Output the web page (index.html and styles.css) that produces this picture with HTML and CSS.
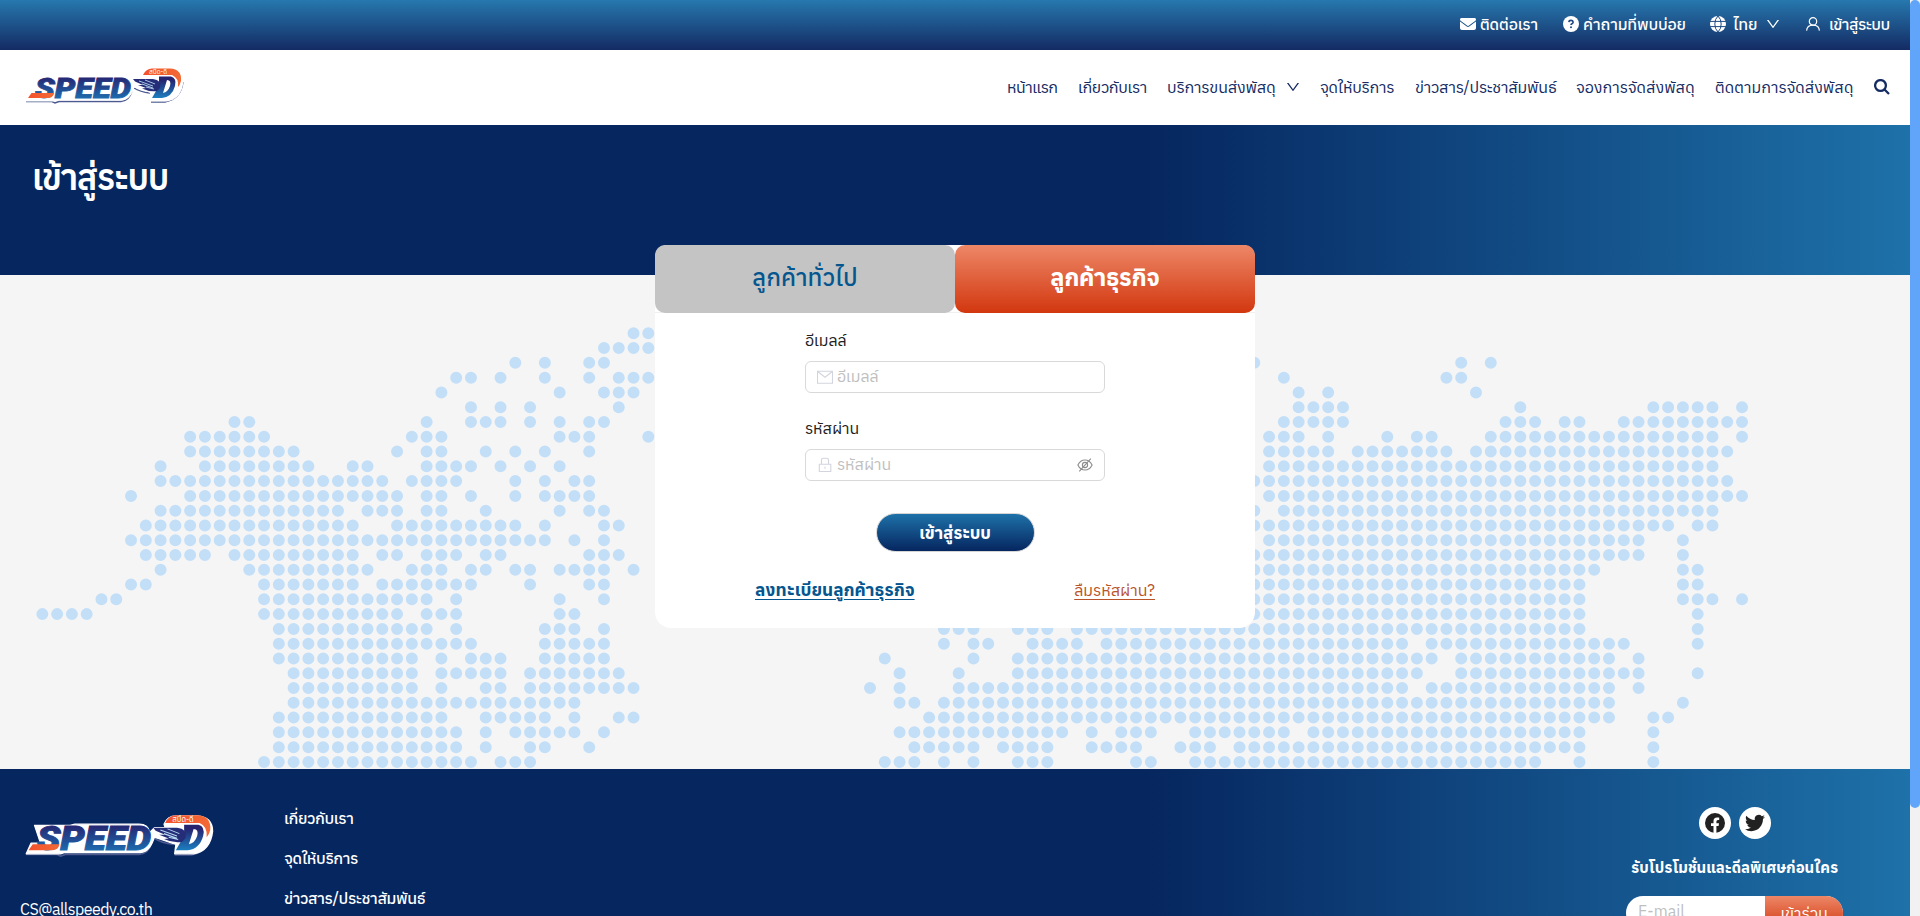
FILE: index.html
```html
<!DOCTYPE html>
<html lang="th">
<head>
<meta charset="utf-8">
<title>เข้าสู่ระบบ - Speed-D</title>
<link rel="stylesheet" href="styles.css">
</head>
<body>
<svg class="defs" width="0" height="0" aria-hidden="true">
  <defs>
    <linearGradient id="blue" x1="0" y1="0" x2="0" y2="1"><stop offset=".15" stop-color="#26236f"/><stop offset="1" stop-color="#1b7fc0"/></linearGradient>
    <linearGradient id="flame" x1="0" y1="0" x2="1" y2="0"><stop offset="0" stop-color="#f4512c"/><stop offset="1" stop-color="#f26a35"/></linearGradient>
    <symbol id="logo" viewBox="0 0 160 36">
      <g class="logo-shadow">
        <path d="M1 33.500H27L30 35L34 33.500H96Q104 33 107 23M109 20Q115 24 125 25M126 34H140Q156 31 158 14"/>
      </g>
      <g class="logo-back">
        <path d="M8 9H38L42 8H96Q104 8 105 15L109 11H118L117 8Q120 1 127 1H145Q158 2 158 14Q156 31 142 33H126L127 25L109 19Q105 32 97 32H33L30 33H1L5 24L13 24Z"/>
      </g>
      <text class="logo-word" x="10" y="29.500" textLength="96" lengthAdjust="spacingAndGlyphs">SPEED</text>
      <path d="M6.500 25H29Q28 30 23 30H3Z" fill="url(#flame)"/>
      <path fill-rule="evenodd" d="M134 8.500H146Q152 10 150 18Q147 29 137 30H127L131 23L134 17ZM142 12L138 25Q143 24 145 18Q146.500 12 142 12Z" fill="url(#blue)"/>
      <path d="M108 11H128Q137 12 135 20L132 23Q124 24 117 20.500L121 20L113 17L118 17L110 13.500Z" fill="#252c78"/>
      <path d="M114 13L128 18M117 16L128 20M121 19L129 21M120 12L130 16" stroke="#b5d8f0" stroke-width=".9" fill="none"/>
      <path d="M118 7Q121 0.500 127 0.500H145Q157 1 156 13Q155 17 153 19Q154 10 147 7Z" fill="url(#flame)"/>
      <text class="logo-tag" x="124" y="6.200" textLength="18" lengthAdjust="spacingAndGlyphs">สปีด-ดี</text>
    </symbol>
    <symbol id="chevron" viewBox="64 64 896 896"><path d="M884 256h-75c-5.100 0-9.900 2.500-12.900 6.600L512 654.200 227.900 262.600c-3-4.100-7.800-6.600-12.900-6.600h-75c-6.500 0-10.300 7.400-6.500 12.700l352.600 486.100c12.800 17.600 39 17.600 51.700 0l352.600-486.100c3.900-5.300.1-12.700-6.400-12.700z"/></symbol>
  </defs>
</svg>

<div class="page">
  <div class="topbar">
    <a class="top-item contact"><svg class="fa" viewBox="0 0 512 512"><path d="M48 64C21.500 64 0 85.500 0 112c0 15.100 7.100 29.300 19.200 38.400L236.800 313.600c11.400 8.500 27 8.500 38.400 0L492.800 150.400c12.100-9.100 19.200-23.300 19.200-38.400c0-26.500-21.500-48-48-48H48zM0 176V384c0 35.300 28.700 64 64 64H448c35.300 0 64-28.700 64-64V176L294.400 339.200c-22.800 17.100-54 17.100-76.800 0L0 176z"/></svg><span>ติดต่อเรา</span></a>
    <a class="top-item faq"><svg class="fa" viewBox="0 0 16 16"><circle cx="8" cy="8" r="8"/><path d="M5.900 6.100Q6 4.400 8 4.400T10.100 6.200Q10.100 7.200 9 7.700 8 8.200 8 9" class="question"/><circle cx="8" cy="11.200" r="1" class="question-dot"/></svg><span>คำถามที่พบบ่อย</span></a>
    <a class="top-item lang"><svg class="fa" viewBox="0 0 16 16"><circle cx="8" cy="8" r="8"/><path class="globe-lines" d="M0 5.400H16M0 10.600H16M8 0Q4.800 3 4.800 8T8 16M8 0Q11.200 3 11.200 8T8 16"/></svg><span>ไทย</span><svg class="chev"><use href="#chevron"/></svg></a>
    <a class="top-item login"><svg class="user" viewBox="0 0 14 14"><circle cx="7" cy="4.400" r="3.700"/><path d="M.6 13.600Q1 8.200 7 8.100T13.400 13.600"/></svg><span>เข้าสู่ระบบ</span></a>
  </div>

  <header class="header">
    <svg class="brand"><use href="#logo"/></svg>
    <nav class="nav">
      <a class="n1">หน้าแรก</a><a class="n2">เกี่ยวกับเรา</a><a class="n3"><span>บริการขนส่งพัสดุ</span><svg class="chev"><use href="#chevron"/></svg></a><a class="n4">จุดให้บริการ</a><a class="n5">ข่าวสาร/ประชาสัมพันธ์</a><a class="n6">จองการจัดส่งพัสดุ</a><a class="n7">ติดตามการจัดส่งพัสดุ</a>
      <svg class="search" viewBox="0 0 16 16"><circle cx="6.500" cy="6.500" r="5.400"/><path d="M10.500 10.500L15 15"/></svg>
    </nav>
  </header>

  <section class="hero"><h1>เข้าสู่ระบบ</h1></section>

  <main class="main">
    <svg class="map" viewBox="-2.865 -3.945 129.230 33.424">
      <path d="M40 0h1.010M38 1h3.010M32 2h.01M34 2h.01M37 2h1.010M82 2h.01M96 2h.01M98 2h.01
      M28 3h1.010M31 3h.01M34 3h.01M37 3h.01M39 3h2.010M84 3h.01M95 3h1.010
      M27 4h.01M35 4h.01M38 4h2.010M85 4h.01M87 4h.01M97 4h.01
      M29 5h.01M31 5h.01M33 5h.01M39 5h.01M85 5h3.010M100 5h.01M109 5h4.010M115 5h.01
      M13 6h1.010M26 6h.01M29 6h2.010M33 6h.01M35 6h.01M37 6h1.010M84 6h4.010M99 6h2.010M103 6h1.010M107 6h8.010
      M10 7h5.010M25 7h2.010M35 7h2.010M41 7h.01M83 7h2.010M87 7h.01M91 7h.01M93 7h1.010M98 7h15.010M115 7h.01
      M10 8h7.010M24 8h.01M26 8h1.010M30 8h.01M32 8h.01M34 8h.01M37 8h.01M83 8h4.010M89 8h6.010M97 8h17.010
      M8 9h.01M11 9h7.010M21 9h1.010M26 9h3.010M31 9h.01M33 9h.01M35 9h.01M83 9h30.010
      M8 10h15.010M25 10h3.010M32 10h.01M34 10h.01M36 10h1.010M82 10h32.010
      M6 11h.01M10 11h14.010M26 11h1.010M29 11h.01M32 11h.01M34 11h3.010M83 11h32.010
      M8 12h12.010M22 12h2.010M26 12h1.010M30 12h.01M35 12h.01M37 12h1.010M82 12h.01M84 12h29.010
      M7 13h14.010M24 13h8.010M34 13h.01M38 13h1.010M82 13h28.010M112 13h1.010
      M6 14h28.010M36 14h.01M38 14h.01M83 14h25.010M111 14h.01
      M7 15h4.010M13 15h8.010M23 15h1.010M26 15h2.010M30 15h1.010M37 15h2.010M82 15h26.010M111 15h.01
      M8 16h.01M14 16h8.010M25 16h2.010M29 16h1.010M32 16h1.010M35 16h3.010M40 16h.01M82 16h23.010M111 16h1.010
      M6 17h1.010M15 17h6.010M23 17h6.010M33 17h.01M37 17h1.010M82 17h22.010M111 17h1.010
      M4 18h1.010M15 18h11.010M28 18h.01M35 18h.01M38 18h.01M82 18h22.010M111 18h2.010M115 18h.01
      M0 19h3.010M15 19h9.010M26 19h2.010M35 19h1.010M82 19h22.010M112 19h.01
      M16 20h10.010M28 20h.01M34 20h2.010M38 20h.01M61 20h2.010M66 20h2.010M70 20h34.010M112 20h.01
      M16 21h13.010M34 21h4.010M61 21h.01M63 21h1.010M67 21h3.010M72 21h20.010M94 21h13.010M112 21h.01
      M16 22h9.010M27 22h.01M29 22h2.010M34 22h4.010M57 22h.01M63 22h.01M66 22h28.010M96 22h10.010M108 22h.01
      M17 23h8.010M27 23h4.010M33 23h6.010M58 23h.01M62 23h.01M66 23h27.010M96 23h12.010M112 23h.01
      M17 24h8.010M27 24h.01M30 24h1.010M33 24h7.010M56 24h.01M58 24h.01M62 24h30.010M94 24h12.010M108 24h.01
      M17 25h19.010M58 25h1.010M61 25h45.010M111 25h.01
      M16 26h11.010M30 26h4.010M36 26h.01M39 26h1.010M60 26h46.010M109 26h1.010
      M16 27h12.010M30 27h.01M32 27h4.010M38 27h.01M58 27h11.010M71 27h.01M73 27h2.010M78 27h6.010M86 27h18.010M109 27h.01
      M16 28h12.010M30 28h.01M33 28h1.010M37 28h.01M59 28h4.010M65 28h3.010M71 28h3.010M77 28h2.010M81 28h23.010M109 28h.01
      M15 29h14.010M31 29h2.010M57 29h2.010M61 29h.01M63 29h.01M66 29h2.010M74 29h1.010M78 29h23.010M104 29h.01M109 29h.01"/>
    </svg>
    <div class="card">
      <div class="tabs"><button class="tab">ลูกค้าทั่วไป</button><button class="tab active">ลูกค้าธุรกิจ</button></div>
      <form class="form">
        <label>อีเมลล์</label>
        <div class="field"><svg viewBox="0 0 16 16"><path d="M.5 2.300h15v11.900H.5zM1 2.800l7 5.500 7-5.500"/></svg><span class="ph">อีเมลล์</span></div>
        <label>รหัสผ่าน</label>
        <div class="field"><svg viewBox="0 0 16 16"><path d="M2.300 7.300h11.500v7.200H2.300zM4.500 7V2.800q0-1.600 1.600-1.600h3.800q1.600 0 1.600 1.600V7M8 9.800v2"/></svg><span class="ph">รหัสผ่าน</span><svg class="eye" viewBox="0 0 16 16"><path d="M.9 8Q3.300 3 8 3t7.100 5Q12.700 13 8 13T.9 8zM13.800 1.700L2.300 14.400"/><circle cx="8" cy="8" r="2.600"/></svg></div>
        <button class="submit">เข้าสู่ระบบ</button>
      </form>
      <div class="links"><a class="register">ลงทะเบียนลูกค้าธุรกิจ</a><a class="forgot">ลืมรหัสผ่าน?</a></div>
    </div>
  </main>

  <footer class="footer">
    <div class="foot-brand"><svg class="brand-big"><use href="#logo"/></svg><p class="mail">CS@allspeedy.co.th</p></div>
    <div class="foot-links"><a>เกี่ยวกับเรา</a><a>จุดให้บริการ</a><a>ข่าวสาร/ประชาสัมพันธ์</a></div>
    <div class="foot-news">
      <div class="social">
        <span><svg viewBox="0 0 20 20"><circle cx="10" cy="10" r="10"/><path class="cut" d="M8.500 20v-7H6V10.200h2.500V8q0-3.600 3.500-3.600 1.200 0 2.200.2V7h-1.300q-1.500 0-1.500 1.500v1.700H14l-.4 2.800h-2.200v7z"/></svg></span>
        <span><svg viewBox="0 0 24 24"><path d="M23.950 4.570a10 10 0 0 1-2.820.77 4.960 4.960 0 0 0 2.160-2.720c-.95.550-2 .950-3.130 1.180a4.920 4.920 0 0 0-8.380 4.480C7.690 8.090 4.070 6.130 1.640 3.160a4.820 4.820 0 0 0-.67 2.480c0 1.710.87 3.210 2.190 4.100a4.900 4.900 0 0 1-2.230-.62v.06a4.920 4.920 0 0 0 3.950 4.830 5 5 0 0 1-2.210.08 4.940 4.940 0 0 0 4.600 3.420A9.870 9.870 0 0 1 0 19.540a13.990 13.990 0 0 0 7.560 2.210c9.050 0 14-7.500 14-13.980 0-.21 0-.42-.02-.63a9.940 9.940 0 0 0 2.410-2.570z"/></svg></span>
      </div>
      <p class="promo">รับโปรโมชั่นและดีลพิเศษก่อนใคร</p>
      <div class="subscribe"><span class="email">E-mail</span><button>เข้าร่วม</button></div>
    </div>
  </footer>
  <div class="scroll"><div class="thumb"></div></div>
</div>
</body>
</html>
```
FILE: styles.css
```css
* { box-sizing: border-box; }
body { margin: 0; font-family: "Anuphan", "Prompt", "Noto Sans Thai", "Open Sans", "Noto Sans", sans-serif; font-size: 16px; color: #212121; }
button { font-family: inherit; border: 0; padding: 0; margin: 0; }
svg { flex: none; }
.defs { position: absolute; }
.page { position: relative; width: 1920px; height: 916px; overflow: hidden; padding-right: 10px; display: flex; flex-direction: column; white-space: nowrap; }

.topbar { height: 50px; flex: none; background: linear-gradient(#2678ae, #142b63); color: #fff; font-weight: 500; display: flex; justify-content: flex-end; align-items: center; padding: 0 20px 2px 0; letter-spacing: -.2px; }
.top-item { display: flex; align-items: center; }
.top-item span { line-height: 24px; }
.fa { width: 16px; height: 16px; fill: #fff; margin-right: 4px; }
.question { fill: none; stroke: #1d4a82; stroke-width: 1.600; }
.question-dot { fill: #1d4a82; }
.globe-lines { fill: none; stroke: #1d4a82; stroke-width: 1; }
.contact { width: 103px; }
.faq { width: 147px; }
.lang { width: 96px; }
.lang .fa { margin-right: 7px; }
.lang .chev { margin-left: 9px; }
.chev { width: 14px; height: 14px; fill: currentColor; margin-left: 10px; }
.user { width: 14px; height: 14px; fill: none; stroke: #fff; stroke-width: 1.200; margin-right: 9px; }
.login { width: 84px; letter-spacing: -.6px; }

.header { height: 75px; flex: none; background: #fff; display: flex; justify-content: space-between; align-items: center; padding: 0 20px 2px 25px; color: #142b63; }
.brand { width: 160px; height: 36px; margin-bottom: 1px; }
.logo-word { font: italic 900 28px "Roboto", sans-serif; fill: url(#blue); stroke: url(#blue); stroke-width: .8; }
.logo-tag { font-size: 6.5px; fill: #fff; letter-spacing: 0; }
.logo-shadow path { fill: none; stroke: #4c5a90; stroke-width: 1.400; }
.logo-back path { fill: #fff; stroke: #fff; stroke-width: 1; stroke-linejoin: round; }
.nav { display: flex; align-items: center; }
.nav a { display: flex; align-items: center; }
.n1 { width: 71px; letter-spacing: -.5px; }
.n2 { width: 89px; letter-spacing: -.3px; }
.n3 { width: 153px; letter-spacing: -.15px; }
.n4 { width: 95px; letter-spacing: -.2px; }
.n5 { width: 161px; letter-spacing: -.2px; }
.n6 { width: 139px; }
.n7 { width: 159px; }
.search { width: 16px; height: 16px; fill: none; stroke: #142b63; stroke-width: 2.300; }

.hero { height: 150px; flex: none; background: linear-gradient(90deg, #06265f 60%, #1e71a9); padding: 25px 0 0 32px; }
h1 { margin: 0; color: #fff; font-size: 35px; line-height: 54px; font-weight: 600; letter-spacing: -1.3px; }

.main { position: relative; height: 494px; flex: none; background: #f5f5f5; display: flex; justify-content: center; }
.map { position: absolute; left: 0; top: 0; width: 1910px; height: 494px; fill: none; stroke: #c3dff8; stroke-width: .812; stroke-linecap: round; stroke-dasharray: 0 1; }
.card { position: relative; width: 600px; height: 383px; margin-top: -30px; background: #fff; border-radius: 12px 12px 16px 16px; }
.tabs { display: flex; height: 68px; border-bottom: 1px solid #f0f0f0; }
.tab { width: 300px; height: 68px; border-radius: 10px; background: #c4c4c4; color: #05568f; font-size: 24px; font-weight: 500; padding-bottom: 4px; }
.tab.active { background: linear-gradient(#ed8767, #d2370f); color: #fff; font-weight: 700; letter-spacing: -.3px; }
.form { width: 300px; margin: 0 auto; padding-top: 14px; }
label { display: block; height: 34px; line-height: 26px; }
.field { height: 32px; border: 1px solid #d9d9d9; border-radius: 6px; display: flex; align-items: center; padding: 0 11px; margin-bottom: 22px; color: #bfbfbf; }
.field svg { width: 16px; height: 16px; fill: none; stroke: #d3d5de; stroke-width: 1.100; margin-right: 4px; }
.field .ph { flex: 1; line-height: 26px; padding-bottom: 2px; }
.field .eye { stroke: #8c8c8c; margin: 0; }
.submit { display: block; width: 159px; height: 39px; margin: 32px auto 0; border-radius: 20px; border: 1px solid #d5d5d5; color: #fff; font-size: 17px; font-weight: 700; letter-spacing: -.2px; background: linear-gradient(#1e71a9, #06265f); }
.links { display: flex; justify-content: space-between; padding: 23px 100px 0; line-height: 30px; }
.links a { text-decoration: underline; text-underline-offset: 3px; }
.register { color: #05568f; font-weight: 700; font-size: 17.5px; }
.forgot { color: #b9532b; }

.footer { height: 147px; flex: none; overflow: hidden; background: linear-gradient(90deg, #06265f 60%, #1e71a9); color: #fff; display: flex; }
.foot-brand { width: 284px; padding: 43px 0 0 25px; }
.brand-big { display: block; width: 190px; height: 48px; }
.mail { margin: 37px 0 0 -5px; line-height: 24px; letter-spacing: -.5px; }
.foot-links { flex: 1; padding-top: 30px; display: flex; flex-direction: column; font-weight: 500; letter-spacing: -.4px; }
.foot-links a { flex: none; height: 40px; line-height: 38px; }
.foot-news { width: 284px; padding-top: 38px; }
.social { display: flex; gap: 8px; padding-left: 73px; }
.social span { width: 32px; height: 32px; border-radius: 50%; background: #fff; display: flex; align-items: center; justify-content: center; }
.social svg { width: 20px; height: 20px; fill: #212121; }
.social .cut { fill: #fff; }
.promo { margin: 12px 0 0 5px; line-height: 32px; font-weight: 700; font-size: 15.2px; }
.subscribe { display: flex; width: 217px; height: 34px; margin-top: 13px; border-radius: 17px; overflow: hidden; background: #fff; }
.email { width: 139px; padding-left: 12px; line-height: 31px; color: #bfbfbf; }
.subscribe button { flex: 1; color: #fff; font-size: 16px; background: linear-gradient(#ed8767, #d2370f); }

.scroll { position: absolute; right: 0; top: 0; width: 10px; height: 916px; background: #f1f1f1; }
.thumb { height: 808px; border-radius: 5px; background: #60a5fa; }
```
